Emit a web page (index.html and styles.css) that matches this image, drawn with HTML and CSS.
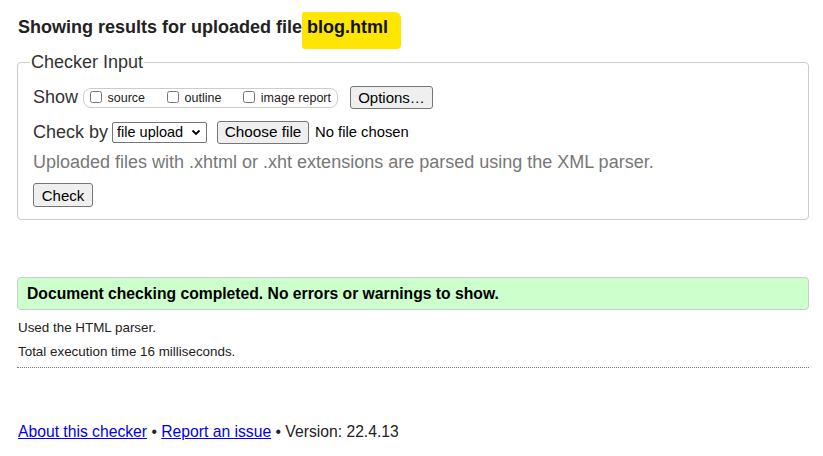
FILE: index.html
```html
<!DOCTYPE html>
<html lang="en">
<head>
<meta charset="utf-8">
<title>Showing results for uploaded file blog.html - Nu Html Checker</title>
<link rel="stylesheet" href="styles.css">
</head>
<body>
<h2 class="title">Showing results for uploaded file <span class="mark">blog.html</span></h2>
<form class="checker">
  <fieldset class="input-box">
    <legend class="legend">Checker Input</legend>
    <div class="row show-row">
      <span class="row-label">Show</span>
      <fieldset class="show-opts">
        <label class="opt"><input type="checkbox" class="cb"> source</label>
        <label class="opt"><input type="checkbox" class="cb"> outline</label>
        <label class="opt opt-last"><input type="checkbox" class="cb"> image report</label>
      </fieldset>
      <button type="button" class="btn btn-options">Options…</button>
    </div>
    <div class="row check-row">
      <span class="row-label">Check by</span>
      <span class="select"><span class="select-text">file upload</span><svg class="chev" width="10" height="7" viewBox="0 0 10 7"><path d="M1.5 1.5 L5 5 L8.5 1.5" fill="none" stroke="#000" stroke-width="1.8"/></svg></span>
      <button type="button" class="btn btn-file">Choose file</button>
      <span class="nofile">No file chosen</span>
    </div>
    <p class="hint">Uploaded files with .xhtml or .xht extensions are parsed using the XML parser.</p>
    <div class="row submit-row">
      <button type="button" class="btn btn-check">Check</button>
    </div>
  </fieldset>
</form>
<div class="success">Document checking completed. No errors or warnings to show.</div>
<p class="details details-first">Used the HTML parser.</p>
<p class="details">Total execution time 16 milliseconds.</p>
<hr class="divider">
<p class="footer"><a href="#">About this checker</a> • <a href="#">Report an issue</a> • Version: 22.4.13</p>
</body>
</html>
```

FILE: styles.css
```css
html { background: #fff; }
body {
  margin: 0;
  padding: 0 14px 0 17px;
  font-family: "Liberation Sans", Arial, sans-serif;
  color: #000;
}
.title {
  margin: 0;
  padding-top: 16px;
  padding-left: 1px;
  font-size: 18px;
  font-weight: bold;
  line-height: 22px;
  color: #222;
}
.mark {
  background: #ffe600;
  padding: 5px 13px 12px 5px;
  margin-left: -5px;
  border-radius: 2px 6px 4px 3px;
  color: #111;
}
.checker { margin: 14px 0 0 0; }
.input-box {
  margin: 0;
  padding: 12px 15px 12px 15px;
  border: 1px solid #ccc;
  border-radius: 4px;
  min-width: 0;
}
.legend {
  padding: 0 1px;
  margin-left: -3px;
  font-size: 18px;
  color: #333;
  line-height: 20px;
}
.row {
  display: flex;
  align-items: center;
}
.row-label {
  font-size: 18px;
  color: #333;
}
.show-row { height: 26px; }
.show-opts {
  display: flex;
  align-items: center;
  margin: 1px 0 0 5px;
  padding: 0 0 0 6px;
  height: 18px;
  border: 1px solid #ccc;
  border-radius: 8px;
  min-width: 0;
}
.opt {
  display: flex;
  align-items: center;
  font-size: 12.5px;
  color: #222;
  margin-right: 22px;
  white-space: pre;
}
.opt-last { margin-right: 6px; }
.cb {
  margin: 0 2px 2px 0;
  width: 12px;
  height: 12px;
}
.btn {
  font-family: "Liberation Sans", Arial, sans-serif;
  background: #efefef;
  border: 1px solid #767676;
  border-radius: 3px;
  color: #000;
  padding: 0 4px;
  cursor: default;
}
.btn-options {
  margin-left: 12px;
  height: 23px;
  width: 83px;
  font-size: 15px;
}
.check-row { margin-top: 10px; height: 24px; }
.select {
  display: inline-flex;
  align-items: center;
  justify-content: space-between;
  margin-left: 4px;
  width: 95px;
  height: 21px;
  box-sizing: border-box;
  border: 1px solid #767676;
  border-radius: 2px;
  padding: 0 5px 0 4px;
  font-size: 14.5px;
  background: #fff;
}
.chev { margin-top: 1px; }
.btn-file {
  margin-left: 10px;
  height: 23px;
  width: 92px;
  font-size: 15.3px;
}
.nofile {
  margin-left: 6px;
  font-size: 14.8px;
  color: #000;
}
.hint {
  margin: 6px 0 0 0;
  font-size: 18px;
  line-height: 24px;
  color: #777;
}
.submit-row { margin-top: 9px; }
.btn-check {
  height: 24px;
  width: 60px;
  font-size: 15px;
}
.success {
  margin-top: 57px;
  height: 33px;
  box-sizing: border-box;
  border: 1px solid #ccc;
  border-radius: 4px;
  background: #ccffcc;
  padding: 7px 9px 0 9px;
  font-size: 15.7px;
  font-weight: bold;
  color: #000;
}
.details {
  margin: 0;
  padding-left: 1px;
  font-size: 13.4px;
  line-height: 24px;
  color: #222;
}
.details-first { margin-top: 6px; }
.divider {
  margin: 3px 0 0 0;
  border: 0;
  border-top: 1px dotted #777;
  height: 0;
}
.footer {
  margin: 55px 0 0 0;
  padding-left: 1px;
  font-size: 15.7px;
  line-height: 18px;
  color: #222;
}
.footer a { color: #00e; }
```
